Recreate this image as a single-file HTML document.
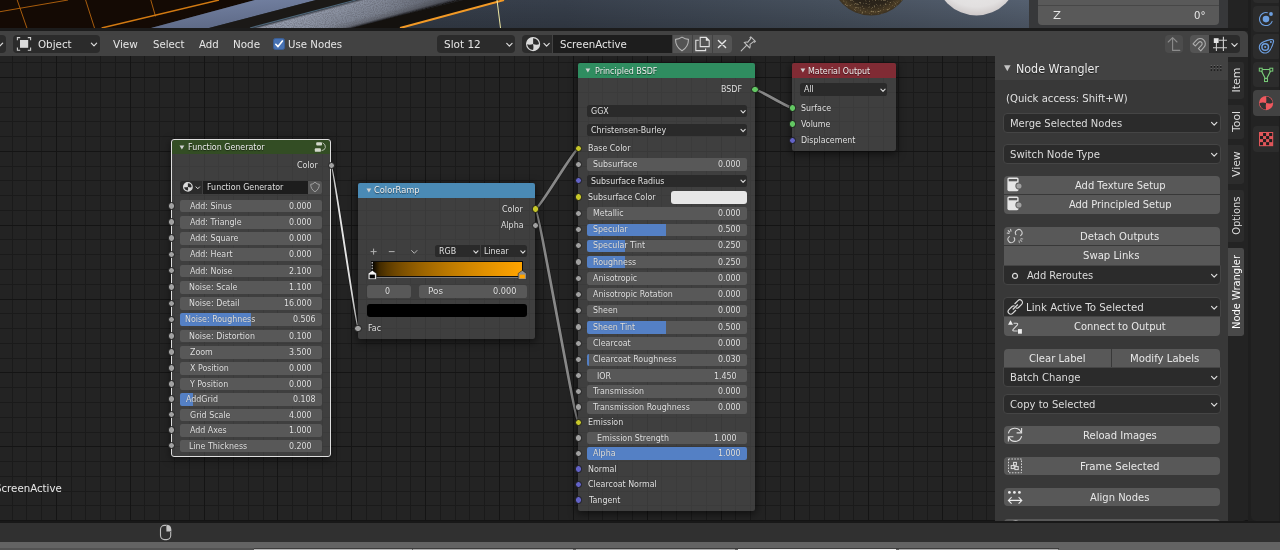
<!DOCTYPE html><html><head><meta charset="utf-8"><title>Blender Node Editor</title><style>
html,body{margin:0;padding:0}
body{width:1280px;height:550px;overflow:hidden;position:relative;background:#232323;font-family:"DejaVu Sans","Liberation Sans",sans-serif;}
#root{position:absolute;left:0;top:0;width:1280px;height:550px;overflow:hidden;will-change:transform}
.a{position:absolute;box-sizing:border-box}
.t{white-space:nowrap;line-height:16px;height:16px;transform-origin:0 50%}
.sh{text-shadow:0 1px 1px rgba(0,0,0,.55)}
.n{text-shadow:0 0 1px rgba(0,0,0,.45)}
svg{position:absolute;overflow:visible}
</style></head><body><div id="root"><svg class="a" style="left:0;top:0" width="1280" height="28" viewBox="0 0 1280 28">
<defs>
<linearGradient id="sl" x1="0" x2="1" y1="0" y2="0"><stop offset="0" stop-color="#343b47"/><stop offset=".55" stop-color="#373f4b"/><stop offset=".8" stop-color="#46505d"/><stop offset="1" stop-color="#556070"/></linearGradient>
<linearGradient id="slv" x1="0" x2="0" y1="0" y2="1"><stop offset="0" stop-color="#000" stop-opacity="0"/><stop offset="1" stop-color="#000" stop-opacity=".16"/></linearGradient>
<linearGradient id="lea" gradientUnits="userSpaceOnUse" x1="303" y1="14" x2="309.8" y2="39.6"><stop offset="0" stop-color="#2a2e35"/><stop offset=".1" stop-color="#959cac"/><stop offset=".7" stop-color="#878e9d"/><stop offset=".9" stop-color="#6c717c"/><stop offset=".975" stop-color="#2a2b30"/><stop offset="1" stop-color="#17140f"/></linearGradient>
<linearGradient id="lea2" gradientUnits="userSpaceOnUse" x1="300" y1="0" x2="470" y2="0"><stop offset="0" stop-color="#16161a" stop-opacity="0"/><stop offset=".5" stop-color="#16161a" stop-opacity=".12"/><stop offset="1" stop-color="#16161a" stop-opacity=".45"/></linearGradient>
<linearGradient id="blu" x1="0" x2="0.3" y1="0" y2="1"><stop offset="0" stop-color="#7482a3"/><stop offset="1" stop-color="#5f6b88"/></linearGradient>
<radialGradient id="ws" cx=".5" cy=".35" r=".68"><stop offset="0" stop-color="#efefef"/><stop offset=".8" stop-color="#e2e0e0"/><stop offset=".95" stop-color="#cfcaca"/><stop offset="1" stop-color="#b9b3b4"/></radialGradient>
<radialGradient id="ds" cx=".5" cy=".5" r=".5"><stop offset="0" stop-color="#1a1611"/><stop offset=".75" stop-color="#2b241a"/><stop offset=".93" stop-color="#4a3c25"/><stop offset="1" stop-color="#3a3020"/></radialGradient>
<filter id="grain" x="0" y="0" width="1" height="1"><feTurbulence type="fractalNoise" baseFrequency=".9" numOctaves="2" seed="7" result="n"/><feColorMatrix in="n" type="matrix" values="0 0 0 0 .08  0 0 0 0 .08  0 0 0 0 .1  0 0 0 1.6 -.55"/><feComposite in2="SourceGraphic" operator="in"/></filter>
<filter id="spk" x="0" y="0" width="1" height="1"><feTurbulence type="fractalNoise" baseFrequency=".55" numOctaves="2" seed="3" result="n"/><feColorMatrix in="n" type="matrix" values="0 0 0 0 .62  0 0 0 0 .5  0 0 0 0 .27  0 0 0 3.4 -1.95"/><feComposite in2="SourceGraphic" operator="in"/></filter>
</defs>
<rect x="0" y="0" width="1030" height="28" fill="url(#sl)"/>
<rect x="0" y="0" width="1030" height="28" fill="url(#slv)"/>
<polygon points="0,0 255,0 151,28 0,28" fill="#140a04"/>
<polygon points="255,0 316,0 209,28 151,28" fill="url(#blu)"/>
<polygon points="316,0 356,0 250,28 209,28" fill="#1b1917"/>
<line x1="356" y1="0" x2="250" y2="28" stroke="#4d6577" stroke-width="1.2"/>
<polygon points="358,0 463,0 400,15.6 352,28 254,28" fill="url(#lea)"/>
<polygon points="358,0 463,0 400,15.6 352,28 254,28" fill="url(#lea2)"/>
<polygon points="358,0 463,0 400,15.6 352,28 254,28" fill="#000" filter="url(#grain)" opacity=".55"/>
<polygon points="463,0 504,0 400,28 352,28 400,15.6" fill="#14110e"/>
<g stroke="#b9670f" stroke-width=".9" fill="none"><line x1="0" y1="11.7" x2="68" y2="0"/><line x1="17.2" y1="0" x2="26.9" y2="28"/><line x1="85.6" y1="0" x2="94.5" y2="28"/><line x1="150.8" y1="0" x2="155.5" y2="16.4"/></g>
<line x1="101.6" y1="28" x2="219" y2="0" stroke="#d27a12" stroke-width="1.4"/>
<line x1="400" y1="28" x2="504" y2="0" stroke="#f39a26" stroke-width="2"/>
<line x1="497" y1="0" x2="500.5" y2="28" stroke="#ede6a2" stroke-width="1"/>
<circle cx="871" cy="-25" r="40.5" fill="url(#ds)"/>
<circle cx="871" cy="-25" r="40" fill="#000" filter="url(#spk)" opacity=".6"/>
<circle cx="976.5" cy="-25.6" r="41" fill="url(#ws)"/>
</svg>
<div class="a" style="left:1029px;top:0px;width:199px;height:28px;background:#37383a;"></div>
<div class="a" style="left:1228px;top:0px;width:20px;height:28px;background:#232323;border-radius:0 0 5px 0;"></div>
<div class="a" style="left:1037.5px;top:0px;width:181.5px;height:25px;background:#595959;border-radius:0 0 4px 4px;"></div>
<div class="a" style="left:1037.5px;top:5px;width:181.5px;height:1px;background:#474747;"></div>
<div class="a t " style="left:1052.72px;top:8.01px;font-size:11px;color:#e6e6e6;transform:scaleX(1.0606);">Z</div>
<div class="a t " style="left:1194.36px;top:8.01px;font-size:11px;color:#e6e6e6;transform:scaleX(0.9250);">0°</div>
<div class="a" style="left:0px;top:28px;width:1280px;height:3px;background:#1c1c1c;"></div>
<svg class="a" style="left:0;top:56px" width="1248" height="466" viewBox="0 56 1248 466" shape-rendering="crispEdges">
<rect x="0" y="56" width="1248" height="466" fill="#232323"/>
<path d="M12.5 56V522M26.5 56V522M41.5 56V522M71.5 56V522M85.5 56V522M100.5 56V522M115.5 56V522M144.5 56V522M159.5 56V522M174.5 56V522M189.5 56V522M218.5 56V522M233.5 56V522M248.5 56V522M263.5 56V522M292.5 56V522M307.5 56V522M322.5 56V522M336.5 56V522M366.5 56V522M381.5 56V522M396.5 56V522M410.5 56V522M440.5 56V522M455.5 56V522M469.5 56V522M484.5 56V522M514.5 56V522M529.5 56V522M543.5 56V522M558.5 56V522M588.5 56V522M602.5 56V522M617.5 56V522M632.5 56V522M661.5 56V522M676.5 56V522M691.5 56V522M706.5 56V522M735.5 56V522M750.5 56V522M765.5 56V522M780.5 56V522M809.5 56V522M824.5 56V522M839.5 56V522M853.5 56V522M883.5 56V522M898.5 56V522M913.5 56V522M927.5 56V522M957.5 56V522M972.5 56V522M986.5 56V522M1001.5 56V522M1031.5 56V522M1046.5 56V522M1060.5 56V522M1075.5 56V522M1105.5 56V522M1119.5 56V522M1134.5 56V522M1149.5 56V522M1178.5 56V522M1193.5 56V522M1208.5 56V522M1223.5 56V522M0 62.5H1248M0 92.5H1248M0 107.5H1248M0 121.5H1248M0 136.5H1248M0 166.5H1248M0 180.5H1248M0 195.5H1248M0 210.5H1248M0 239.5H1248M0 254.5H1248M0 269.5H1248M0 284.5H1248M0 313.5H1248M0 328.5H1248M0 343.5H1248M0 358.5H1248M0 387.5H1248M0 402.5H1248M0 417.5H1248M0 432.5H1248M0 461.5H1248M0 476.5H1248M0 491.5H1248M0 505.5H1248" stroke="#1a1a1a" stroke-width="1" fill="none"/>
<path d="M56.5 56V522M130.5 56V522M204.5 56V522M277.5 56V522M351.5 56V522M425.5 56V522M499.5 56V522M573.5 56V522M647.5 56V522M721.5 56V522M794.5 56V522M868.5 56V522M942.5 56V522M1016.5 56V522M1090.5 56V522M1164.5 56V522M1238.5 56V522M0 77.5H1248M0 151.5H1248M0 225.5H1248M0 299.5H1248M0 372.5H1248M0 446.5H1248M0 520.5H1248" stroke="#141414" stroke-width="1" fill="none"/>
</svg>
<div class="a" style="left:0px;top:31px;width:1248px;height:25px;background:#424242;border-radius:0 5px 0 0;"></div>
<div class="a" style="left:1228px;top:40px;width:20px;height:17px;background:#424242;"></div>
<div class="a" style="left:-5px;top:35px;width:10.5px;height:18px;background:#2b2b2b;border-radius:4px;"></div>
<svg class="a" style="left:0;top:0" width="1" height="1"><path d="M-2.65 43.15L0 45.85L2.65 43.15" stroke="#dcdcdc" stroke-width="1.2" fill="none" stroke-linecap="round" stroke-linejoin="round"/></svg>
<div class="a" style="left:13px;top:35px;width:87px;height:18px;background:#2b2b2b;border-radius:4px;"></div>
<div class="a t " style="left:38.44px;top:37.01px;font-size:11px;color:#e6e6e6;transform:scaleX(0.9382);">Object</div>
<svg class="a" style="left:0;top:0" width="1" height="1"><path d="M91.35 43.15L94 45.85L96.65 43.15" stroke="#dcdcdc" stroke-width="1.2" fill="none" stroke-linecap="round" stroke-linejoin="round"/></svg>
<div class="a t " style="left:113.05px;top:37.01px;font-size:11px;color:#e6e6e6;transform:scaleX(0.9529);">View</div>
<div class="a t " style="left:152.85px;top:37.01px;font-size:11px;color:#e6e6e6;transform:scaleX(0.9250);">Select</div>
<div class="a t " style="left:199.35px;top:37.01px;font-size:11px;color:#e6e6e6;transform:scaleX(0.9228);">Add</div>
<div class="a t " style="left:232.51px;top:37.01px;font-size:11px;color:#e6e6e6;transform:scaleX(0.9413);">Node</div>
<div class="a" style="left:273px;top:38px;width:12.3px;height:12.3px;background:#4772b3;border-radius:2.5px;border:1px solid #3a5e95;"></div>
<svg class="a" style="left:273px;top:38px" width="12" height="12" viewBox="0 0 12 12"><path d="M2.8 6.3L5 8.6L9.4 3" stroke="#fff" stroke-width="1.6" fill="none" stroke-linecap="round" stroke-linejoin="round"/></svg>
<div class="a t " style="left:288.12px;top:37.01px;font-size:11px;color:#e6e6e6;transform:scaleX(0.9262);">Use Nodes</div>
<div class="a" style="left:437px;top:35px;width:78px;height:18px;background:#2b2b2b;border-radius:4px;"></div>
<div class="a t " style="left:443.73px;top:37.01px;font-size:11px;color:#e6e6e6;transform:scaleX(0.9517);">Slot 12</div>
<svg class="a" style="left:0;top:0" width="1" height="1"><path d="M506.75 43.449999999999996L509.4 46.15L512.05 43.449999999999996" stroke="#dcdcdc" stroke-width="1.2" fill="none" stroke-linecap="round" stroke-linejoin="round"/></svg>
<div class="a" style="left:522.2px;top:35px;width:30px;height:18px;background:#2b2b2b;border-radius:4px 0 0 4px;"></div>
<svg class="a" style="left:525.8px;top:36.8px" width="14.2" height="14.2" viewBox="0 0 14.2 14.2"><circle cx="7.1" cy="7.1" r="6.5" fill="none" stroke="#dadada" stroke-width="1.2"/><path d="M7.1 7.1L7.1 0.6A6.5 6.5 0 0 0 0.6 7.1Q3.55 8.165 7.1 7.1Z" fill="#dadada"/><path d="M7.1 7.1Q10.649999999999999 8.52 13.6 7.1A6.5 6.5 0 0 1 7.1 13.6Q7.952 10.649999999999999 7.1 7.1Z" fill="#dadada"/></svg>
<svg class="a" style="left:0;top:0" width="1" height="1"><path d="M543.95 43.449999999999996L546.6 46.15L549.25 43.449999999999996" stroke="#dcdcdc" stroke-width="1.2" fill="none" stroke-linecap="round" stroke-linejoin="round"/></svg>
<div class="a" style="left:552.9px;top:35px;width:119px;height:18px;background:#1d1d1d;"></div>
<div class="a t " style="left:559.95px;top:37.01px;font-size:11px;color:#e6e6e6;transform:scaleX(0.9302);">ScreenActive</div>
<div class="a" style="left:672.5px;top:35px;width:19.4px;height:18px;background:#545454;"></div>
<svg class="a" style="left:681.6px;top:44.2px" width="1" height="1"><path d="M0 -6.85Q3.25 -4.6499999999999995 6.5 -4.6499999999999995Q6.5 3.0825 0 6.85Q-6.5 3.0825 -6.5 -4.6499999999999995Q-3.25 -4.6499999999999995 0 -6.85Z" fill="none" stroke="#b4b4b4" stroke-width="1.1" stroke-linejoin="round"/></svg>
<div class="a" style="left:692.75px;top:35px;width:19.2px;height:18px;background:#545454;"></div>
<svg class="a" style="left:692.75px;top:35px" width="20" height="18" viewBox="0 0 20 18"><path d="M5.8 5.2H2.8V15.6H12.6V13.4" fill="none" stroke="#e0e0e0" stroke-width="1.1"/><path d="M7.2 2.4H13.2L16.2 5.4V11.6H7.2Z" fill="none" stroke="#e0e0e0" stroke-width="1.1"/><path d="M12.8 2.2L16.4 5.8H12.8Z" fill="#ececec"/></svg>
<div class="a" style="left:712.9px;top:35px;width:19px;height:18px;background:#545454;border-radius:0 4px 4px 0;"></div>
<svg class="a" style="left:712.9px;top:35px" width="19" height="18" viewBox="0 0 19 18"><path d="M5.4 5.4L12.6 12.6M12.6 5.4L5.4 12.6" stroke="#e6e6e6" stroke-width="1.4" stroke-linecap="round"/></svg>
<svg class="a" style="left:740px;top:36px" width="17" height="16" viewBox="0 0 17 16"><path d="M1.2 14.8L6.8 9.2" stroke="#bdbdbd" stroke-width="1.1" stroke-linecap="round"/><path d="M4.2 6.4Q6 5.6 7.8 6.2L10.6 2.6L10 1.6L10.8 0.8L15.4 5.4L14.6 6.2L13.6 5.6L10 8.4Q10.6 10.2 9.8 12Z" fill="none" stroke="#bdbdbd" stroke-width="1.1" stroke-linejoin="round"/></svg>
<div class="a" style="left:1165px;top:35px;width:18px;height:18px;background:#4c4c4c;border-radius:4px;"></div>
<svg class="a" style="left:1165px;top:35px" width="18" height="18" viewBox="0 0 18 18"><path d="M3.2 7L7.6 2.6L12 7M7.6 2.8V15.4H14.8" fill="none" stroke="#8c8c8c" stroke-width="1.1" stroke-linecap="round" stroke-linejoin="round"/></svg>
<div class="a" style="left:1190px;top:35px;width:19px;height:18px;background:#545454;border-radius:4px 0 0 4px;"></div>
<svg class="a" style="left:1190px;top:35px" width="19" height="18" viewBox="0 0 19 18"><g transform="translate(9.2 9.8) rotate(42)"><path d="M-5.2 3.4V-1.4A5.2 5.2 0 0 1 5.2 -1.4V3.4H2V-1.4A2 2 0 0 0 -2 -1.4V3.4Z" fill="none" stroke="#adadad" stroke-width="1.1" stroke-linejoin="round"/></g></svg>
<div class="a" style="left:1209px;top:35px;width:31px;height:18px;background:#2b2b2b;border-radius:0 4px 4px 0;"></div>
<svg class="a" style="left:1209px;top:35px" width="31" height="18" viewBox="0 0 31 18"><rect x="4.8" y="3.2" width="4.8" height="4.8" fill="#e4e4e4"/><path d="M7.4 8V16M14.4 1.8V16M9.6 5.2H18M4 12.7H18" stroke="#cfcfcf" stroke-width="1.1" fill="none"/></svg>
<svg class="a" style="left:0;top:0" width="1" height="1"><path d="M1231.85 43.65L1234.5 46.35L1237.15 43.65" stroke="#dcdcdc" stroke-width="1.2" fill="none" stroke-linecap="round" stroke-linejoin="round"/></svg>
<svg class="a" style="left:16px;top:36px" width="16" height="16" viewBox="0 0 16 16"><rect x="4" y="4" width="8.2" height="7.8" fill="#dcdcdc"/><path d="M1.4 4.2V1.6H4.2M11.8 1.6H14.6V4.2M14.6 11.6V14.2H11.8M4.2 14.2H1.4V11.6" fill="none" stroke="#cfcfcf" stroke-width="1.1"/></svg>
<svg class="a" style="left:0;top:0" width="1" height="1"><path d="M331.3 165.5C333.3 165.5 356.2 328.6 358.2 328.6" stroke="#141414" stroke-width="3.0999999999999996" fill="none" opacity=".5"/><path d="M331.3 165.5C333.3 165.5 356.2 328.6 358.2 328.6" stroke="#e4e4e4" stroke-width="1.9" fill="none"/></svg>
<svg class="a" style="left:0;top:0" width="1" height="1"><path d="M535.5 209C539.5 209 574.3 148.6 578.3 148.6" stroke="#141414" stroke-width="3.9000000000000004" fill="none" opacity=".5"/><path d="M535.5 209C539.5 209 574.3 148.6 578.3 148.6" stroke="#888888" stroke-width="2.7" fill="none"/></svg>
<svg class="a" style="left:0;top:0" width="1" height="1"><path d="M535.5 209C538.5 209 575.3 422.3 578.3 422.3" stroke="#141414" stroke-width="3.9000000000000004" fill="none" opacity=".5"/><path d="M535.5 209C538.5 209 575.3 422.3 578.3 422.3" stroke="#888888" stroke-width="2.7" fill="none"/></svg>
<svg class="a" style="left:0;top:0" width="1" height="1"><path d="M755 89.5C759.0 89.5 788.4 108 792.4 108" stroke="#141414" stroke-width="3.9000000000000004" fill="none" opacity=".5"/><path d="M755 89.5C759.0 89.5 788.4 108 792.4 108" stroke="#888888" stroke-width="2.7" fill="none"/></svg>
<div class="a" style="left:171.5px;top:139.5px;width:158.89999999999998px;height:316.8px;border-radius:2.2px;background:rgba(78,78,78,.66);box-shadow:0 2px 8px 1px rgba(0,0,0,.55);overflow:hidden;"><div class="a" style="left:0;top:0;width:158.89999999999998px;height:14.300000000000011px;background:#334d24"></div></div>
<div class="a" style="left:171.0px;top:139.0px;width:159.89999999999998px;height:317.8px;border-radius:3px;border:1px solid #dedede;"></div>
<svg class="a" style="left:178.5px;top:144.55px" width="6" height="5" viewBox="0 0 6 5"><path d="M0.5 0.6H5.3L2.9 4.6Z" fill="#d0d0d0"/></svg>
<div class="a t sh" style="left:187.94px;top:139.26px;font-size:8.4px;color:#ececec;transform:scaleX(0.9477);">Function Generator</div>
<svg class="a" style="left:314px;top:141px" width="13" height="12" viewBox="0 0 13 12"><rect x="2.2" y="1.2" width="5.8" height="3.3" rx=".9" fill="#d3d8cc"/><rect x=".8" y="7.3" width="6.1" height="3.5" rx=".9" fill="#d3d8cc"/><path d="M8.6 1.8Q11.8 3.4 11.4 6.4Q11 9.2 7.6 9.6" fill="none" stroke="#c2c8ba" stroke-width=".9"/></svg>
<div class="a t n" style="left:297.03px;top:157.11px;font-size:8.4px;color:#e2e2e2;transform:scaleX(0.9450);">Color</div>
<div class="a" style="left:180.4px;top:181px;width:22px;height:12.6px;background:#2b2b2b;border-radius:2.6px 0 0 2.6px;"></div>
<svg class="a" style="left:182.7px;top:182.4px" width="9.8" height="9.8" viewBox="0 0 9.8 9.8"><circle cx="4.9" cy="4.9" r="4.300000000000001" fill="none" stroke="#dadada" stroke-width="1.2"/><path d="M4.9 4.9L4.9 0.6A4.300000000000001 4.300000000000001 0 0 0 0.6 4.9Q2.45 5.635 4.9 4.9Z" fill="#dadada"/><path d="M4.9 4.9Q7.3500000000000005 5.88 9.200000000000001 4.9A4.300000000000001 4.300000000000001 0 0 1 4.9 9.200000000000001Q5.488000000000001 7.3500000000000005 4.9 4.9Z" fill="#dadada"/></svg>
<svg class="a" style="left:0;top:0" width="1" height="1"><path d="M196.0 186.85000000000002L197.8 188.75L199.60000000000002 186.85000000000002" stroke="#dcdcdc" stroke-width="1.0" fill="none" stroke-linecap="round" stroke-linejoin="round"/></svg>
<div class="a" style="left:202.6px;top:181px;width:105px;height:12.6px;background:#1d1d1d;"></div>
<div class="a t n" style="left:206.54px;top:178.91px;font-size:8.4px;color:#e2e2e2;transform:scaleX(0.9450);">Function Generator</div>
<div class="a" style="left:307.6px;top:181px;width:14.2px;height:12.6px;background:#545454;border-radius:0 2.6px 2.6px 0;"></div>
<svg class="a" style="left:314.7px;top:187.4px" width="1" height="1"><path d="M0 -4.8Q2.15 -2.5999999999999996 4.3 -2.5999999999999996Q4.3 2.16 0 4.8Q-4.3 2.16 -4.3 -2.5999999999999996Q-2.15 -2.5999999999999996 0 -4.8Z" fill="none" stroke="#a8a8a8" stroke-width="0.9" stroke-linejoin="round"/></svg>
<div class="a" style="left:180px;top:199.70px;width:142px;height:12.7px;border-radius:2.2px;background:#585858;overflow:hidden"></div>
<div class="a t n" style="left:190.15px;top:198.21px;font-size:8.4px;color:#e2e2e2;transform:scaleX(0.9450);">Add: Sinus</div>
<div class="a t n" style="left:289.39px;top:198.21px;font-size:8.4px;color:#e2e2e2;transform:scaleX(0.9450);">0.000</div>
<div class="a" style="left:180px;top:216.00px;width:142px;height:12.7px;border-radius:2.2px;background:#585858;overflow:hidden"></div>
<div class="a t n" style="left:190.15px;top:213.71px;font-size:8.4px;color:#e2e2e2;transform:scaleX(0.9450);">Add: Triangle</div>
<div class="a t n" style="left:289.39px;top:213.71px;font-size:8.4px;color:#e2e2e2;transform:scaleX(0.9450);">0.000</div>
<div class="a" style="left:180px;top:232.00px;width:142px;height:12.7px;border-radius:2.2px;background:#585858;overflow:hidden"></div>
<div class="a t n" style="left:190.15px;top:229.71px;font-size:8.4px;color:#e2e2e2;transform:scaleX(0.9450);">Add: Square</div>
<div class="a t n" style="left:289.39px;top:229.71px;font-size:8.4px;color:#e2e2e2;transform:scaleX(0.9450);">0.000</div>
<div class="a" style="left:180px;top:248.30px;width:142px;height:12.7px;border-radius:2.2px;background:#585858;overflow:hidden"></div>
<div class="a t n" style="left:190.15px;top:246.01px;font-size:8.4px;color:#e2e2e2;transform:scaleX(0.9450);">Add: Heart</div>
<div class="a t n" style="left:289.39px;top:246.01px;font-size:8.4px;color:#e2e2e2;transform:scaleX(0.9450);">0.000</div>
<div class="a" style="left:180px;top:264.60px;width:142px;height:12.7px;border-radius:2.2px;background:#585858;overflow:hidden"></div>
<div class="a t n" style="left:190.15px;top:263.11px;font-size:8.4px;color:#e2e2e2;transform:scaleX(0.9450);">Add: Noise</div>
<div class="a t n" style="left:289.39px;top:263.11px;font-size:8.4px;color:#e2e2e2;transform:scaleX(0.9450);">2.100</div>
<div class="a" style="left:180px;top:280.90px;width:142px;height:12.7px;border-radius:2.2px;background:#585858;overflow:hidden"></div>
<div class="a t n" style="left:189.44px;top:278.61px;font-size:8.4px;color:#e2e2e2;transform:scaleX(0.9450);">Noise: Scale</div>
<div class="a t n" style="left:289.39px;top:278.61px;font-size:8.4px;color:#e2e2e2;transform:scaleX(0.9450);">1.100</div>
<div class="a" style="left:180px;top:297.20px;width:142px;height:12.7px;border-radius:2.2px;background:#585858;overflow:hidden"></div>
<div class="a t n" style="left:189.44px;top:294.91px;font-size:8.4px;color:#e2e2e2;transform:scaleX(0.9450);">Noise: Detail</div>
<div class="a t n" style="left:284.34px;top:294.91px;font-size:8.4px;color:#e2e2e2;transform:scaleX(0.9450);">16.000</div>
<div class="a" style="left:180px;top:313.40px;width:142px;height:12.7px;border-radius:2.2px;background:#585858;overflow:hidden"><div class="a" style="left:0;top:0;height:12.7px;width:70.57px;background:#5480c5"></div></div>
<div class="a t n" style="left:185.44px;top:311.11px;font-size:8.4px;color:#e2e2e2;transform:scaleX(0.9450);">Noise: Roughness</div>
<div class="a t n" style="left:292.84px;top:311.11px;font-size:8.4px;color:#e2e2e2;transform:scaleX(0.9450);">0.506</div>
<div class="a" style="left:180px;top:329.70px;width:142px;height:12.7px;border-radius:2.2px;background:#585858;overflow:hidden"></div>
<div class="a t n" style="left:189.44px;top:328.21px;font-size:8.4px;color:#e2e2e2;transform:scaleX(0.9450);">Noise: Distortion</div>
<div class="a t n" style="left:289.39px;top:328.21px;font-size:8.4px;color:#e2e2e2;transform:scaleX(0.9450);">0.100</div>
<div class="a" style="left:180px;top:346.00px;width:142px;height:12.7px;border-radius:2.2px;background:#585858;overflow:hidden"></div>
<div class="a t n" style="left:189.87px;top:343.71px;font-size:8.4px;color:#e2e2e2;transform:scaleX(0.9450);">Zoom</div>
<div class="a t n" style="left:289.39px;top:343.71px;font-size:8.4px;color:#e2e2e2;transform:scaleX(0.9450);">3.500</div>
<div class="a" style="left:180px;top:362.00px;width:142px;height:12.7px;border-radius:2.2px;background:#585858;overflow:hidden"></div>
<div class="a t n" style="left:189.96px;top:359.71px;font-size:8.4px;color:#e2e2e2;transform:scaleX(0.9450);">X Position</div>
<div class="a t n" style="left:289.39px;top:359.71px;font-size:8.4px;color:#e2e2e2;transform:scaleX(0.9450);">0.000</div>
<div class="a" style="left:180px;top:377.80px;width:142px;height:12.7px;border-radius:2.2px;background:#585858;overflow:hidden"></div>
<div class="a t n" style="left:190.25px;top:375.51px;font-size:8.4px;color:#e2e2e2;transform:scaleX(0.9450);">Y Position</div>
<div class="a t n" style="left:289.39px;top:375.51px;font-size:8.4px;color:#e2e2e2;transform:scaleX(0.9450);">0.000</div>
<div class="a" style="left:180px;top:393.00px;width:142px;height:12.7px;border-radius:2.2px;background:#585858;overflow:hidden"><div class="a" style="left:0;top:0;height:12.7px;width:13.02px;background:#5480c5"></div></div>
<div class="a t n" style="left:186.15px;top:390.71px;font-size:8.4px;color:#e2e2e2;transform:scaleX(0.9450);">AddGrid</div>
<div class="a t n" style="left:292.89px;top:390.71px;font-size:8.4px;color:#e2e2e2;transform:scaleX(0.9450);">0.108</div>
<div class="a" style="left:180px;top:408.60px;width:142px;height:12.7px;border-radius:2.2px;background:#585858;overflow:hidden"></div>
<div class="a t n" style="left:189.77px;top:407.11px;font-size:8.4px;color:#e2e2e2;transform:scaleX(0.9450);">Grid Scale</div>
<div class="a t n" style="left:289.39px;top:407.11px;font-size:8.4px;color:#e2e2e2;transform:scaleX(0.9450);">4.000</div>
<div class="a" style="left:180px;top:424.10px;width:142px;height:12.7px;border-radius:2.2px;background:#585858;overflow:hidden"></div>
<div class="a t n" style="left:190.15px;top:421.81px;font-size:8.4px;color:#e2e2e2;transform:scaleX(0.9450);">Add Axes</div>
<div class="a t n" style="left:289.39px;top:421.81px;font-size:8.4px;color:#e2e2e2;transform:scaleX(0.9450);">1.000</div>
<div class="a" style="left:180px;top:439.60px;width:142px;height:12.7px;border-radius:2.2px;background:#585858;overflow:hidden"></div>
<div class="a t n" style="left:189.44px;top:438.11px;font-size:8.4px;color:#e2e2e2;transform:scaleX(0.9450);">Line Thickness</div>
<div class="a t n" style="left:289.39px;top:438.11px;font-size:8.4px;color:#e2e2e2;transform:scaleX(0.9450);">0.200</div>
<div class="a" style="left:327.50px;top:161.70px;width:7.6px;height:7.6px;border-radius:50%;background:#a1a1a1;border:.7px solid #1a1a1a"></div>
<div class="a" style="left:167.70px;top:202.00px;width:7.6px;height:7.6px;border-radius:50%;background:#a1a1a1;border:.7px solid #1a1a1a"></div>
<div class="a" style="left:167.70px;top:218.30px;width:7.6px;height:7.6px;border-radius:50%;background:#a1a1a1;border:.7px solid #1a1a1a"></div>
<div class="a" style="left:167.70px;top:234.30px;width:7.6px;height:7.6px;border-radius:50%;background:#a1a1a1;border:.7px solid #1a1a1a"></div>
<div class="a" style="left:167.70px;top:250.60px;width:7.6px;height:7.6px;border-radius:50%;background:#a1a1a1;border:.7px solid #1a1a1a"></div>
<div class="a" style="left:167.70px;top:266.90px;width:7.6px;height:7.6px;border-radius:50%;background:#a1a1a1;border:.7px solid #1a1a1a"></div>
<div class="a" style="left:167.70px;top:283.20px;width:7.6px;height:7.6px;border-radius:50%;background:#a1a1a1;border:.7px solid #1a1a1a"></div>
<div class="a" style="left:167.70px;top:299.50px;width:7.6px;height:7.6px;border-radius:50%;background:#a1a1a1;border:.7px solid #1a1a1a"></div>
<div class="a" style="left:167.70px;top:315.70px;width:7.6px;height:7.6px;border-radius:50%;background:#a1a1a1;border:.7px solid #1a1a1a"></div>
<div class="a" style="left:167.70px;top:332.00px;width:7.6px;height:7.6px;border-radius:50%;background:#a1a1a1;border:.7px solid #1a1a1a"></div>
<div class="a" style="left:167.70px;top:348.30px;width:7.6px;height:7.6px;border-radius:50%;background:#a1a1a1;border:.7px solid #1a1a1a"></div>
<div class="a" style="left:167.70px;top:364.30px;width:7.6px;height:7.6px;border-radius:50%;background:#a1a1a1;border:.7px solid #1a1a1a"></div>
<div class="a" style="left:167.70px;top:380.10px;width:7.6px;height:7.6px;border-radius:50%;background:#a1a1a1;border:.7px solid #1a1a1a"></div>
<div class="a" style="left:167.70px;top:395.30px;width:7.6px;height:7.6px;border-radius:50%;background:#a1a1a1;border:.7px solid #1a1a1a"></div>
<div class="a" style="left:167.70px;top:410.90px;width:7.6px;height:7.6px;border-radius:50%;background:#a1a1a1;border:.7px solid #1a1a1a"></div>
<div class="a" style="left:167.70px;top:426.40px;width:7.6px;height:7.6px;border-radius:50%;background:#a1a1a1;border:.7px solid #1a1a1a"></div>
<div class="a" style="left:167.70px;top:441.90px;width:7.6px;height:7.6px;border-radius:50%;background:#a1a1a1;border:.7px solid #1a1a1a"></div>
<div class="a" style="left:357.8px;top:182.8px;width:177.2px;height:156.7px;border-radius:2.2px;background:rgba(78,78,78,.66);box-shadow:0 2px 8px 1px rgba(0,0,0,.55);overflow:hidden;"><div class="a" style="left:0;top:0;width:177.2px;height:14.899999999999977px;background:#4a8ab5"></div></div>
<svg class="a" style="left:365.5px;top:188.15px" width="6" height="5" viewBox="0 0 6 5"><path d="M0.5 0.6H5.3L2.9 4.6Z" fill="#d0d0d0"/></svg>
<div class="a t sh" style="left:374.06px;top:181.81px;font-size:8.4px;color:#ececec;transform:scaleX(0.9876);">ColorRamp</div>
<div class="a t n" style="left:501.93px;top:200.61px;font-size:8.4px;color:#e2e2e2;transform:scaleX(0.9450);">Color</div>
<div class="a t n" style="left:500.84px;top:217.01px;font-size:8.4px;color:#e2e2e2;transform:scaleX(0.9450);">Alpha</div>
<svg class="a" style="left:369px;top:246.5px" width="10" height="10" viewBox="0 0 10 10"><path d="M4.6 1.6V7.6M1.6 4.6H7.6" stroke="#b0b0b0" stroke-width="1" fill="none"/></svg>
<svg class="a" style="left:387px;top:246.5px" width="10" height="10" viewBox="0 0 10 10"><path d="M1.8 4.6H7.6" stroke="#b0b0b0" stroke-width="1" fill="none"/></svg>
<svg class="a" style="left:0;top:0" width="1" height="1"><path d="M411.6 250.5L414.3 253.3L417.0 250.5" stroke="#b4b4b4" stroke-width="1.0" fill="none" stroke-linecap="round" stroke-linejoin="round"/></svg>
<div class="a" style="left:435.20px;top:245.30px;width:44.70px;height:12.20px;border-radius:2.6px 0 0 2.6px;background:#2a2a2a"></div>
<div class="a t n" style="left:438.54px;top:242.81px;font-size:8.4px;color:#e2e2e2;transform:scaleX(0.9450);">RGB</div>
<svg class="a" style="left:0;top:0" width="1" height="1"><path d="M473.79999999999995 250.9L475.9 253.1L478.0 250.9" stroke="#dcdcdc" stroke-width="1.1" fill="none" stroke-linecap="round" stroke-linejoin="round"/></svg>
<div class="a" style="left:480.90px;top:245.30px;width:46.00px;height:12.20px;border-radius:0 2.6px 2.6px 0;background:#2a2a2a"></div>
<div class="a t n" style="left:484.34px;top:242.81px;font-size:8.4px;color:#e2e2e2;transform:scaleX(0.9450);">Linear</div>
<svg class="a" style="left:0;top:0" width="1" height="1"><path d="M520.8 250.9L522.9 253.1L525.0 250.9" stroke="#dcdcdc" stroke-width="1.1" fill="none" stroke-linecap="round" stroke-linejoin="round"/></svg>
<div class="a" style="left:370.6px;top:260.8px;width:152.2px;height:15.9px;border:1px solid #0c0c0c;background:linear-gradient(90deg,rgb(0,0,0) 0%,rgb(65,42,0) 5%,rgb(90,58,0) 10%,rgb(108,69,0) 15%,rgb(123,79,0) 20%,rgb(136,87,0) 25%,rgb(148,95,0) 30%,rgb(158,102,0) 35%,rgb(168,108,0) 40%,rgb(177,114,0) 45%,rgb(186,120,0) 50%,rgb(194,125,0) 55%,rgb(202,130,0) 60%,rgb(210,135,0) 65%,rgb(217,139,0) 70%,rgb(224,144,0) 75%,rgb(230,148,0) 80%,rgb(237,152,0) 85%,rgb(243,156,0) 90%,rgb(249,160,0) 95%,rgb(255,164,0) 100%)"></div>
<div class="a" style="left:375px;top:277px;width:144px;height:1px;background:#7c7c7c;"></div>
<svg class="a" style="left:367px;top:261px" width="12" height="20" viewBox="0 0 12 20"><path d="M5.2 1V9" stroke="#fff" stroke-width="1" stroke-dasharray="1.6 1.2"/><path d="M1.2 18.5V12.4L5.3 9.4L9.4 12.4V18.5Z" fill="#f6f6f6" stroke="#141414" stroke-width=".5"/><rect x="2.6" y="13.6" width="5.3" height="3.8" fill="#050505"/></svg>
<svg class="a" style="left:517.4px;top:261px" width="12" height="20" viewBox="0 0 12 20"><path d="M1.2 18.5V12.4L5.3 9.4L9.4 12.4V18.5Z" fill="#909090" stroke="#141414" stroke-width=".5"/><rect x="2.6" y="13.6" width="5.3" height="3.8" fill="#ffa400"/></svg>
<div class="a" style="left:367px;top:285px;width:44px;height:12.6px;border-radius:2.6px;background:#585858"></div>
<div class="a t n" style="left:385.47px;top:282.91px;font-size:8.4px;color:#e2e2e2;transform:scaleX(0.9450);">0</div>
<div class="a" style="left:419px;top:285px;width:108px;height:12.6px;border-radius:2.6px;background:#585858"></div>
<div class="a t n" style="left:428.16px;top:282.91px;font-size:8.4px;color:#e2e2e2;transform:scaleX(1.0530);">Pos</div>
<div class="a t n" style="left:493.46px;top:282.91px;font-size:8.4px;color:#e2e2e2;transform:scaleX(0.9759);">0.000</div>
<div class="a" style="left:367px;top:304px;width:160px;height:12.8px;background:#000;border-radius:3px;"></div>
<div class="a t n" style="left:367.94px;top:320.21px;font-size:8.4px;color:#e2e2e2;transform:scaleX(0.9450);">Fac</div>
<div class="a" style="left:531.70px;top:205.20px;width:7.6px;height:7.6px;border-radius:50%;background:#c7c729;border:.7px solid #1a1a1a"></div>
<div class="a" style="left:531.70px;top:221.60px;width:7.6px;height:7.6px;border-radius:50%;background:#a1a1a1;border:.7px solid #1a1a1a"></div>
<div class="a" style="left:354.40px;top:324.80px;width:7.6px;height:7.6px;border-radius:50%;background:#a1a1a1;border:.7px solid #1a1a1a"></div>
<div class="a" style="left:578px;top:63.2px;width:177px;height:447.6px;border-radius:2.2px;background:rgba(78,78,78,.66);box-shadow:0 2px 8px 1px rgba(0,0,0,.55);overflow:hidden;"><div class="a" style="left:0;top:0;width:177px;height:14.5px;background:#2f8d60"></div></div>
<svg class="a" style="left:585.0px;top:68.35000000000001px" width="6" height="5" viewBox="0 0 6 5"><path d="M0.5 0.6H5.3L2.9 4.6Z" fill="#d0d0d0"/></svg>
<div class="a t sh" style="left:594.74px;top:63.06px;font-size:8.4px;color:#ececec;transform:scaleX(0.9462);">Principled BSDF</div>
<div class="a t n" style="left:721.23px;top:81.11px;font-size:8.4px;color:#e2e2e2;transform:scaleX(0.9450);">BSDF</div>
<div class="a" style="left:587.20px;top:105.20px;width:159.90px;height:12.00px;border-radius:2.6px;background:#2a2a2a"></div>
<div class="a t n" style="left:590.97px;top:102.81px;font-size:8.4px;color:#e2e2e2;transform:scaleX(0.9450);">GGX</div>
<svg class="a" style="left:0;top:0" width="1" height="1"><path d="M741.0 110.7L743.1 112.89999999999999L745.2 110.7" stroke="#dcdcdc" stroke-width="1.1" fill="none" stroke-linecap="round" stroke-linejoin="round"/></svg>
<div class="a" style="left:587.20px;top:123.90px;width:159.90px;height:12.00px;border-radius:2.6px;background:#2a2a2a"></div>
<div class="a t n" style="left:590.97px;top:121.51px;font-size:8.4px;color:#e2e2e2;transform:scaleX(0.9450);">Christensen-Burley</div>
<svg class="a" style="left:0;top:0" width="1" height="1"><path d="M741.0 129.4L743.1 131.6L745.2 129.4" stroke="#dcdcdc" stroke-width="1.1" fill="none" stroke-linecap="round" stroke-linejoin="round"/></svg>
<div class="a t n" style="left:587.84px;top:140.01px;font-size:8.4px;color:#e2e2e2;transform:scaleX(0.9450);">Base Color</div>
<div class="a" style="left:587.2px;top:158.30px;width:159.89999999999998px;height:12.7px;border-radius:2.2px;background:#585858;overflow:hidden"></div>
<div class="a t n" style="left:592.88px;top:156.01px;font-size:8.4px;color:#e2e2e2;transform:scaleX(0.9450);">Subsurface</div>
<div class="a t n" style="left:717.99px;top:156.01px;font-size:8.4px;color:#e2e2e2;transform:scaleX(0.9450);">0.000</div>
<div class="a" style="left:587.20px;top:174.70px;width:159.90px;height:12.00px;border-radius:2.6px;background:#2a2a2a"></div>
<div class="a t n" style="left:591.18px;top:172.91px;font-size:8.4px;color:#e2e2e2;transform:scaleX(0.9450);">Subsurface Radius</div>
<svg class="a" style="left:0;top:0" width="1" height="1"><path d="M741.0 180.2L743.1 182.39999999999998L745.2 180.2" stroke="#dcdcdc" stroke-width="1.1" fill="none" stroke-linecap="round" stroke-linejoin="round"/></svg>
<div class="a t n" style="left:587.98px;top:188.61px;font-size:8.4px;color:#e2e2e2;transform:scaleX(0.9450);">Subsurface Color</div>
<div class="a" style="left:671.2px;top:191.2px;width:75.9px;height:13px;background:#e7e7e7;border-radius:3px;"></div>
<div class="a" style="left:587.2px;top:207.20px;width:159.89999999999998px;height:12.7px;border-radius:2.2px;background:#585858;overflow:hidden"></div>
<div class="a t n" style="left:592.64px;top:204.91px;font-size:8.4px;color:#e2e2e2;transform:scaleX(0.9450);">Metallic</div>
<div class="a t n" style="left:717.99px;top:204.91px;font-size:8.4px;color:#e2e2e2;transform:scaleX(0.9450);">0.000</div>
<div class="a" style="left:587.2px;top:223.50px;width:159.89999999999998px;height:12.7px;border-radius:2.2px;background:#585858;overflow:hidden"><div class="a" style="left:0;top:0;height:12.7px;width:78.65px;background:#5480c5"></div></div>
<div class="a t n" style="left:592.88px;top:221.21px;font-size:8.4px;color:#e2e2e2;transform:scaleX(0.9450);">Specular</div>
<div class="a t n" style="left:717.99px;top:221.21px;font-size:8.4px;color:#e2e2e2;transform:scaleX(0.9450);">0.500</div>
<div class="a" style="left:587.2px;top:239.50px;width:159.89999999999998px;height:12.7px;border-radius:2.2px;background:#585858;overflow:hidden"><div class="a" style="left:0;top:0;height:12.7px;width:38.02px;background:#5480c5"></div></div>
<div class="a t n" style="left:592.88px;top:237.21px;font-size:8.4px;color:#e2e2e2;transform:scaleX(0.9450);">Specular Tint</div>
<div class="a t n" style="left:717.99px;top:237.21px;font-size:8.4px;color:#e2e2e2;transform:scaleX(0.9450);">0.250</div>
<div class="a" style="left:587.2px;top:255.80px;width:159.89999999999998px;height:12.7px;border-radius:2.2px;background:#585858;overflow:hidden"><div class="a" style="left:0;top:0;height:12.7px;width:38.02px;background:#5480c5"></div></div>
<div class="a t n" style="left:592.64px;top:253.51px;font-size:8.4px;color:#e2e2e2;transform:scaleX(0.9450);">Roughness</div>
<div class="a t n" style="left:717.99px;top:253.51px;font-size:8.4px;color:#e2e2e2;transform:scaleX(0.9450);">0.250</div>
<div class="a" style="left:587.2px;top:272.20px;width:159.89999999999998px;height:12.7px;border-radius:2.2px;background:#585858;overflow:hidden"></div>
<div class="a t n" style="left:593.35px;top:269.91px;font-size:8.4px;color:#e2e2e2;transform:scaleX(0.9450);">Anisotropic</div>
<div class="a t n" style="left:717.99px;top:269.91px;font-size:8.4px;color:#e2e2e2;transform:scaleX(0.9450);">0.000</div>
<div class="a" style="left:587.2px;top:288.30px;width:159.89999999999998px;height:12.7px;border-radius:2.2px;background:#585858;overflow:hidden"></div>
<div class="a t n" style="left:593.35px;top:286.01px;font-size:8.4px;color:#e2e2e2;transform:scaleX(0.9450);">Anisotropic Rotation</div>
<div class="a t n" style="left:717.99px;top:286.01px;font-size:8.4px;color:#e2e2e2;transform:scaleX(0.9450);">0.000</div>
<div class="a" style="left:587.2px;top:304.60px;width:159.89999999999998px;height:12.7px;border-radius:2.2px;background:#585858;overflow:hidden"></div>
<div class="a t n" style="left:592.88px;top:302.31px;font-size:8.4px;color:#e2e2e2;transform:scaleX(0.9450);">Sheen</div>
<div class="a t n" style="left:717.99px;top:302.31px;font-size:8.4px;color:#e2e2e2;transform:scaleX(0.9450);">0.000</div>
<div class="a" style="left:587.2px;top:320.90px;width:159.89999999999998px;height:12.7px;border-radius:2.2px;background:#585858;overflow:hidden"><div class="a" style="left:0;top:0;height:12.7px;width:78.65px;background:#5480c5"></div></div>
<div class="a t n" style="left:592.88px;top:318.61px;font-size:8.4px;color:#e2e2e2;transform:scaleX(0.9450);">Sheen Tint</div>
<div class="a t n" style="left:717.99px;top:318.61px;font-size:8.4px;color:#e2e2e2;transform:scaleX(0.9450);">0.500</div>
<div class="a" style="left:587.2px;top:337.20px;width:159.89999999999998px;height:12.7px;border-radius:2.2px;background:#585858;overflow:hidden"></div>
<div class="a t n" style="left:592.97px;top:334.91px;font-size:8.4px;color:#e2e2e2;transform:scaleX(0.9450);">Clearcoat</div>
<div class="a t n" style="left:717.99px;top:334.91px;font-size:8.4px;color:#e2e2e2;transform:scaleX(0.9450);">0.000</div>
<div class="a" style="left:587.2px;top:353.50px;width:159.89999999999998px;height:12.7px;border-radius:2.2px;background:#585858;overflow:hidden"><div class="a" style="left:0;top:0;height:12.7px;width:2.27px;background:#5480c5"></div></div>
<div class="a t n" style="left:592.97px;top:351.21px;font-size:8.4px;color:#e2e2e2;transform:scaleX(0.9450);">Clearcoat Roughness</div>
<div class="a t n" style="left:717.99px;top:351.21px;font-size:8.4px;color:#e2e2e2;transform:scaleX(0.9450);">0.030</div>
<div class="a" style="left:587.2px;top:369.20px;width:159.89999999999998px;height:12.7px;border-radius:2.2px;background:#585858;overflow:hidden"></div>
<div class="a t n" style="left:596.64px;top:367.81px;font-size:8.4px;color:#e2e2e2;transform:scaleX(0.9450);">IOR</div>
<div class="a t n" style="left:714.49px;top:367.81px;font-size:8.4px;color:#e2e2e2;transform:scaleX(0.9450);">1.450</div>
<div class="a" style="left:587.2px;top:385.30px;width:159.89999999999998px;height:12.7px;border-radius:2.2px;background:#585858;overflow:hidden"></div>
<div class="a t n" style="left:593.45px;top:383.01px;font-size:8.4px;color:#e2e2e2;transform:scaleX(0.9450);">Transmission</div>
<div class="a t n" style="left:717.99px;top:383.01px;font-size:8.4px;color:#e2e2e2;transform:scaleX(0.9450);">0.000</div>
<div class="a" style="left:587.2px;top:401.10px;width:159.89999999999998px;height:12.7px;border-radius:2.2px;background:#585858;overflow:hidden"></div>
<div class="a t n" style="left:593.45px;top:398.81px;font-size:8.4px;color:#e2e2e2;transform:scaleX(0.9450);">Transmission Roughness</div>
<div class="a t n" style="left:717.99px;top:398.81px;font-size:8.4px;color:#e2e2e2;transform:scaleX(0.9450);">0.000</div>
<div class="a t n" style="left:587.84px;top:413.91px;font-size:8.4px;color:#e2e2e2;transform:scaleX(0.9450);">Emission</div>
<div class="a" style="left:587.2px;top:431.70px;width:159.89999999999998px;height:12.7px;border-radius:2.2px;background:#585858;overflow:hidden"></div>
<div class="a t n" style="left:596.64px;top:430.31px;font-size:8.4px;color:#e2e2e2;transform:scaleX(0.9450);">Emission Strength</div>
<div class="a t n" style="left:714.49px;top:430.31px;font-size:8.4px;color:#e2e2e2;transform:scaleX(0.9450);">1.000</div>
<div class="a" style="left:587.2px;top:447.30px;width:159.89999999999998px;height:12.7px;border-radius:2.2px;background:#585858;overflow:hidden"><div class="a" style="left:0;top:0;height:12.7px;width:159.90px;background:#5480c5"></div></div>
<div class="a t n" style="left:593.35px;top:445.01px;font-size:8.4px;color:#e2e2e2;transform:scaleX(0.9450);">Alpha</div>
<div class="a t n" style="left:717.99px;top:445.01px;font-size:8.4px;color:#e2e2e2;transform:scaleX(0.9450);">1.000</div>
<div class="a t n" style="left:587.84px;top:460.71px;font-size:8.4px;color:#e2e2e2;transform:scaleX(0.9450);">Normal</div>
<div class="a t n" style="left:588.17px;top:476.31px;font-size:8.4px;color:#e2e2e2;transform:scaleX(0.9450);">Clearcoat Normal</div>
<div class="a t n" style="left:588.65px;top:491.51px;font-size:8.4px;color:#e2e2e2;transform:scaleX(0.9450);">Tangent</div>
<div class="a" style="left:751.20px;top:85.70px;width:7.6px;height:7.6px;border-radius:50%;background:#63c763;border:.7px solid #1a1a1a"></div>
<div class="a" style="left:574.70px;top:144.60px;width:7.6px;height:7.6px;border-radius:50%;background:#c7c729;border:.7px solid #1a1a1a"></div>
<div class="a" style="left:574.70px;top:160.60px;width:7.6px;height:7.6px;border-radius:50%;background:#a1a1a1;border:.7px solid #1a1a1a"></div>
<div class="a" style="left:574.70px;top:176.90px;width:7.6px;height:7.6px;border-radius:50%;background:#6363c7;border:.7px solid #1a1a1a"></div>
<div class="a" style="left:574.70px;top:193.20px;width:7.6px;height:7.6px;border-radius:50%;background:#c7c729;border:.7px solid #1a1a1a"></div>
<div class="a" style="left:574.70px;top:209.50px;width:7.6px;height:7.6px;border-radius:50%;background:#a1a1a1;border:.7px solid #1a1a1a"></div>
<div class="a" style="left:574.70px;top:225.80px;width:7.6px;height:7.6px;border-radius:50%;background:#a1a1a1;border:.7px solid #1a1a1a"></div>
<div class="a" style="left:574.70px;top:241.80px;width:7.6px;height:7.6px;border-radius:50%;background:#a1a1a1;border:.7px solid #1a1a1a"></div>
<div class="a" style="left:574.70px;top:258.10px;width:7.6px;height:7.6px;border-radius:50%;background:#a1a1a1;border:.7px solid #1a1a1a"></div>
<div class="a" style="left:574.70px;top:274.50px;width:7.6px;height:7.6px;border-radius:50%;background:#a1a1a1;border:.7px solid #1a1a1a"></div>
<div class="a" style="left:574.70px;top:290.60px;width:7.6px;height:7.6px;border-radius:50%;background:#a1a1a1;border:.7px solid #1a1a1a"></div>
<div class="a" style="left:574.70px;top:306.90px;width:7.6px;height:7.6px;border-radius:50%;background:#a1a1a1;border:.7px solid #1a1a1a"></div>
<div class="a" style="left:574.70px;top:323.20px;width:7.6px;height:7.6px;border-radius:50%;background:#a1a1a1;border:.7px solid #1a1a1a"></div>
<div class="a" style="left:574.70px;top:339.50px;width:7.6px;height:7.6px;border-radius:50%;background:#a1a1a1;border:.7px solid #1a1a1a"></div>
<div class="a" style="left:574.70px;top:355.80px;width:7.6px;height:7.6px;border-radius:50%;background:#a1a1a1;border:.7px solid #1a1a1a"></div>
<div class="a" style="left:574.70px;top:371.50px;width:7.6px;height:7.6px;border-radius:50%;background:#a1a1a1;border:.7px solid #1a1a1a"></div>
<div class="a" style="left:574.70px;top:387.60px;width:7.6px;height:7.6px;border-radius:50%;background:#a1a1a1;border:.7px solid #1a1a1a"></div>
<div class="a" style="left:574.70px;top:403.40px;width:7.6px;height:7.6px;border-radius:50%;background:#a1a1a1;border:.7px solid #1a1a1a"></div>
<div class="a" style="left:574.70px;top:418.50px;width:7.6px;height:7.6px;border-radius:50%;background:#c7c729;border:.7px solid #1a1a1a"></div>
<div class="a" style="left:574.70px;top:434.00px;width:7.6px;height:7.6px;border-radius:50%;background:#a1a1a1;border:.7px solid #1a1a1a"></div>
<div class="a" style="left:574.70px;top:449.60px;width:7.6px;height:7.6px;border-radius:50%;background:#a1a1a1;border:.7px solid #1a1a1a"></div>
<div class="a" style="left:574.70px;top:465.30px;width:7.6px;height:7.6px;border-radius:50%;background:#6363c7;border:.7px solid #1a1a1a"></div>
<div class="a" style="left:574.70px;top:480.90px;width:7.6px;height:7.6px;border-radius:50%;background:#6363c7;border:.7px solid #1a1a1a"></div>
<div class="a" style="left:574.70px;top:496.10px;width:7.6px;height:7.6px;border-radius:50%;background:#6363c7;border:.7px solid #1a1a1a"></div>
<div class="a" style="left:792.4px;top:63px;width:103.20000000000005px;height:88px;border-radius:2.2px;background:rgba(78,78,78,.66);box-shadow:0 2px 8px 1px rgba(0,0,0,.55);overflow:hidden;"><div class="a" style="left:0;top:0;width:103.20000000000005px;height:14.599999999999994px;background:#802b34"></div></div>
<svg class="a" style="left:799.5px;top:68.2px" width="6" height="5" viewBox="0 0 6 5"><path d="M0.5 0.6H5.3L2.9 4.6Z" fill="#d0d0d0"/></svg>
<div class="a t sh" style="left:807.84px;top:62.91px;font-size:8.4px;color:#ececec;transform:scaleX(0.9449);">Material Output</div>
<div class="a" style="left:800.00px;top:83.40px;width:87.00px;height:12.40px;border-radius:2.6px;background:#2a2a2a"></div>
<div class="a t n" style="left:803.95px;top:81.01px;font-size:8.4px;color:#e2e2e2;transform:scaleX(0.9450);">All</div>
<svg class="a" style="left:0;top:0" width="1" height="1"><path d="M880.9 89.1L883.0 91.29999999999998L885.1 89.1" stroke="#dcdcdc" stroke-width="1.1" fill="none" stroke-linecap="round" stroke-linejoin="round"/></svg>
<div class="a t n" style="left:800.88px;top:99.61px;font-size:8.4px;color:#e2e2e2;transform:scaleX(0.9450);">Surface</div>
<div class="a" style="left:788.60px;top:104.20px;width:7.6px;height:7.6px;border-radius:50%;background:#63c763;border:.7px solid #1a1a1a"></div>
<div class="a t n" style="left:801.35px;top:115.61px;font-size:8.4px;color:#e2e2e2;transform:scaleX(0.9450);">Volume</div>
<div class="a" style="left:788.60px;top:120.20px;width:7.6px;height:7.6px;border-radius:50%;background:#63c763;border:.7px solid #1a1a1a"></div>
<div class="a t n" style="left:800.64px;top:132.21px;font-size:8.4px;color:#e2e2e2;transform:scaleX(0.9450);">Displacement</div>
<div class="a" style="left:788.60px;top:136.80px;width:7.6px;height:7.6px;border-radius:50%;background:#6363c7;border:.7px solid #1a1a1a"></div>
<div class="a t " style="left:-5.15px;top:481.01px;font-size:11px;color:#e8e8e8;transform:scaleX(0.9295);">ScreenActive</div>
<div class="a" style="left:995px;top:56px;width:233.4px;height:466px;background:#383838;"></div>
<div class="a" style="left:995px;top:56px;width:233.4px;height:24px;background:#424242;"></div>
<svg class="a" style="left:1003px;top:64px" width="9" height="8" viewBox="0 0 9 8"><path d="M1 1.2H7.6L4.3 7.2Z" fill="#c4c4c4"/></svg>
<div class="a t sh" style="left:1016.44px;top:61.07px;font-size:12px;color:#ececec;transform:scaleX(0.9256);">Node Wrangler</div>
<svg class="a" style="left:0;top:0" width="1" height="1"><rect x="1210.70" y="65.20" width="1.2" height="1" fill="#6e6e6e"/><rect x="1210.70" y="66.20" width="1.3" height="1.3" fill="#0e0e0e"/><rect x="1210.70" y="68.35" width="1.2" height="1" fill="#6e6e6e"/><rect x="1210.70" y="69.35" width="1.3" height="1.3" fill="#0e0e0e"/><rect x="1213.85" y="65.20" width="1.2" height="1" fill="#6e6e6e"/><rect x="1213.85" y="66.20" width="1.3" height="1.3" fill="#0e0e0e"/><rect x="1213.85" y="68.35" width="1.2" height="1" fill="#6e6e6e"/><rect x="1213.85" y="69.35" width="1.3" height="1.3" fill="#0e0e0e"/><rect x="1217.00" y="65.20" width="1.2" height="1" fill="#6e6e6e"/><rect x="1217.00" y="66.20" width="1.3" height="1.3" fill="#0e0e0e"/><rect x="1217.00" y="68.35" width="1.2" height="1" fill="#6e6e6e"/><rect x="1217.00" y="69.35" width="1.3" height="1.3" fill="#0e0e0e"/><rect x="1220.15" y="65.20" width="1.2" height="1" fill="#6e6e6e"/><rect x="1220.15" y="66.20" width="1.3" height="1.3" fill="#0e0e0e"/><rect x="1220.15" y="68.35" width="1.2" height="1" fill="#6e6e6e"/><rect x="1220.15" y="69.35" width="1.3" height="1.3" fill="#0e0e0e"/></svg>
<div class="a t " style="left:1005.97px;top:91.01px;font-size:11px;color:#e0e0e0;transform:scaleX(0.9173);">(Quick access: Shift+W)</div>
<div class="a" style="left:1003px;top:113px;width:218.40000000000003px;height:20px;background:#2b2b2b;border-radius:4px;border:1px solid #454545;"></div>
<div class="a t " style="left:1010.25px;top:116.01px;font-size:11px;color:#dcdcdc;transform:scaleX(0.9083);">Merge Selected Nodes</div>
<svg class="a" style="left:0;top:0" width="1" height="1"><path d="M1211.55 122.45L1214.2 125.14999999999999L1216.8500000000001 122.45" stroke="#dcdcdc" stroke-width="1.2" fill="none" stroke-linecap="round" stroke-linejoin="round"/></svg>
<div class="a" style="left:1003px;top:144.3px;width:218.40000000000003px;height:19.6px;background:#2b2b2b;border-radius:4px;border:1px solid #454545;"></div>
<div class="a t " style="left:1010.35px;top:147.01px;font-size:11px;color:#dcdcdc;transform:scaleX(0.9244);">Switch Node Type</div>
<svg class="a" style="left:0;top:0" width="1" height="1"><path d="M1211.55 153.45000000000002L1214.2 156.15L1216.8500000000001 153.45000000000002" stroke="#dcdcdc" stroke-width="1.2" fill="none" stroke-linecap="round" stroke-linejoin="round"/></svg>
<div class="a" style="left:1004px;top:176px;width:216.20000000000005px;height:18px;background:#585858;border-radius:4px 4px 0 0;"></div>
<div class="a t " style="left:1075.35px;top:178.01px;font-size:11px;color:#e8e8e8;transform:scaleX(0.9015);">Add Texture Setup</div>
<div class="a" style="left:1004px;top:195.1px;width:216.20000000000005px;height:18.8px;background:#585858;border-radius:0 0 4px 4px;"></div>
<div class="a t " style="left:1068.96px;top:197.01px;font-size:11px;color:#e8e8e8;transform:scaleX(0.8982);">Add Principled Setup</div>
<div class="a" style="left:1004px;top:227.3px;width:216.20000000000005px;height:17.8px;background:#585858;border-radius:4px 4px 0 0;"></div>
<div class="a t " style="left:1080.34px;top:229.01px;font-size:11px;color:#e8e8e8;transform:scaleX(0.9135);">Detach Outputs</div>
<div class="a" style="left:1004px;top:246.1px;width:216.20000000000005px;height:18.5px;background:#585858;border-radius:0;"></div>
<div class="a t " style="left:1083.06px;top:248.01px;font-size:11px;color:#e8e8e8;transform:scaleX(0.9182);">Swap Links</div>
<div class="a" style="left:1003px;top:265px;width:218.40000000000003px;height:20.2px;background:#2b2b2b;border-radius:0 0 4px 4px;border:1px solid #454545;"></div>
<div class="a t " style="left:1027.35px;top:268.01px;font-size:11px;color:#dcdcdc;transform:scaleX(0.9010);">Add Reroutes</div>
<svg class="a" style="left:0;top:0" width="1" height="1"><path d="M1211.55 274.45L1214.2 277.15000000000003L1216.8500000000001 274.45" stroke="#dcdcdc" stroke-width="1.2" fill="none" stroke-linecap="round" stroke-linejoin="round"/></svg>
<div class="a" style="left:1003px;top:297px;width:218.40000000000003px;height:19.8px;background:#2b2b2b;border-radius:4px 4px 0 0;border:1px solid #454545;"></div>
<div class="a t " style="left:1026.42px;top:300.01px;font-size:11px;color:#dcdcdc;transform:scaleX(0.9326);">Link Active To Selected</div>
<svg class="a" style="left:0;top:0" width="1" height="1"><path d="M1211.55 306.45L1214.2 309.15000000000003L1216.8500000000001 306.45" stroke="#dcdcdc" stroke-width="1.2" fill="none" stroke-linecap="round" stroke-linejoin="round"/></svg>
<div class="a" style="left:1004px;top:317.2px;width:216.20000000000005px;height:18.5px;background:#585858;border-radius:0 0 4px 4px;"></div>
<div class="a t " style="left:1073.66px;top:319.01px;font-size:11px;color:#e8e8e8;transform:scaleX(0.9002);">Connect to Output</div>
<div class="a" style="left:1004px;top:349.4px;width:107.40000000000009px;height:17.9px;background:#585858;border-radius:4px 0 0 0;"></div>
<div class="a t " style="left:1028.75px;top:351.01px;font-size:11px;color:#e8e8e8;transform:scaleX(0.9133);">Clear Label</div>
<div class="a" style="left:1112.4px;top:349.4px;width:107.79999999999995px;height:17.9px;background:#585858;border-radius:0 4px 0 0;"></div>
<div class="a t " style="left:1130.43px;top:351.01px;font-size:11px;color:#e8e8e8;transform:scaleX(0.9204);">Modify Labels</div>
<div class="a" style="left:1003px;top:367.2px;width:218.40000000000003px;height:20.1px;background:#2b2b2b;border-radius:0 0 4px 4px;border:1px solid #454545;"></div>
<div class="a t " style="left:1010.04px;top:370.01px;font-size:11px;color:#dcdcdc;transform:scaleX(0.9125);">Batch Change</div>
<svg class="a" style="left:0;top:0" width="1" height="1"><path d="M1211.55 376.45L1214.2 379.15000000000003L1216.8500000000001 376.45" stroke="#dcdcdc" stroke-width="1.2" fill="none" stroke-linecap="round" stroke-linejoin="round"/></svg>
<div class="a" style="left:1003px;top:394.2px;width:218.40000000000003px;height:19.6px;background:#2b2b2b;border-radius:4px;border:1px solid #454545;"></div>
<div class="a t " style="left:1010.45px;top:397.01px;font-size:11px;color:#dcdcdc;transform:scaleX(0.9126);">Copy to Selected</div>
<svg class="a" style="left:0;top:0" width="1" height="1"><path d="M1211.55 403.45L1214.2 406.15000000000003L1216.8500000000001 403.45" stroke="#dcdcdc" stroke-width="1.2" fill="none" stroke-linecap="round" stroke-linejoin="round"/></svg>
<div class="a" style="left:1004px;top:426.1px;width:216.20000000000005px;height:17.8px;background:#585858;border-radius:4px;"></div>
<div class="a t " style="left:1082.75px;top:428.01px;font-size:11px;color:#e8e8e8;transform:scaleX(0.9092);">Reload Images</div>
<div class="a" style="left:1004px;top:457.2px;width:216.20000000000005px;height:17.9px;background:#585858;border-radius:4px;"></div>
<div class="a t " style="left:1080.42px;top:459.01px;font-size:11px;color:#e8e8e8;transform:scaleX(0.9302);">Frame Selected</div>
<div class="a" style="left:1004px;top:488.1px;width:216.20000000000005px;height:17.8px;background:#585858;border-radius:4px;"></div>
<div class="a t " style="left:1090.35px;top:490.01px;font-size:11px;color:#e8e8e8;transform:scaleX(0.9054);">Align Nodes</div>
<div class="a" style="left:1004px;top:519.3px;width:216.20000000000005px;height:17.6px;background:#585858;border-radius:4px;"></div>
<svg class="a" style="left:1007.2px;top:177.2px" width="15" height="15" viewBox="0 0 15 15"><rect x=".4" y=".4" width="11.2" height="13.8" rx="1.6" fill="#e6e6e6"/><rect x="1.7" y="2" width="8.5" height="2.3" fill="#585858"/><circle cx="11.9" cy="9" r="3.5" fill="#585858"/><circle cx="11.9" cy="9" r="2.6" fill="#a2a2a2"/></svg>
<svg class="a" style="left:1007.2px;top:196.4px" width="15" height="15" viewBox="0 0 15 15"><rect x=".4" y=".4" width="11.2" height="13.8" rx="1.6" fill="#e6e6e6"/><rect x="1.7" y="2" width="8.5" height="2.3" fill="#585858"/><circle cx="11.9" cy="9" r="3.5" fill="#585858"/><circle cx="11.9" cy="9" r="2.6" fill="#a2a2a2"/></svg>
<svg class="a" style="left:1006px;top:228px" width="18" height="16" viewBox="0 0 18 16"><g fill="none" stroke="#cfcfcf" stroke-width="1.1" stroke-linecap="round"><path d="M9.9 6.6A3.3 3.3 0 1 1 14.6 7.6"/><path d="M8.1 9.6A3.3 3.3 0 1 1 3.4 8.6"/><path d="M4.6 1.4L5 3.2M2.2 2.6L3.6 4M1.2 5L3 5.4"/><path d="M13.4 14.6L13 12.8M15.8 13.4L14.4 12M16.8 11L15 10.6" opacity=".7"/></g></svg>
<svg class="a" style="left:1011px;top:272px" width="8" height="8" viewBox="0 0 8 8"><circle cx="4" cy="3.9" r="2.5" fill="none" stroke="#dcdcdc" stroke-width="1.2"/></svg>
<svg class="a" style="left:1006px;top:298px" width="18" height="18" viewBox="0 0 18 18"><g fill="none" stroke="#dadada" stroke-width="1.2" transform="translate(9.3 9) rotate(-45)"><path d="M-1.6 -2.6H-6.4A2.6 2.6 0 0 0 -6.4 2.6H-1.6M1.6 -2.6H6.4A2.6 2.6 0 0 1 6.4 2.6H1.6M-3.6 0H3.6M-1.6 -2.6A2.6 2.6 0 0 1 0.2 -1.2M1.6 2.6A2.6 2.6 0 0 1 -0.2 1.2"/></g></svg>
<svg class="a" style="left:1007px;top:319px" width="16" height="16" viewBox="0 0 16 16"><path d="M1 5.8L3.5 1.2L6 5.8Z" fill="#ececec"/><path d="M6.6 4.3H9.6Q11.2 4.4 10.4 6L6.2 10.4Q5 12 7 12H10.6" fill="none" stroke="#d6d6d6" stroke-width="1.1"/><rect x="11" y="10.1" width="3.9" height="4.6" fill="#efefef"/></svg>
<svg class="a" style="left:1007px;top:427px" width="16" height="16" viewBox="0 0 16 16"><g fill="none" stroke="#e0e0e0" stroke-width="1.1"><path d="M1.4 6.4A6.6 6.6 0 0 1 14 5.4"/><path d="M14.6 1V5.9H9.6"/><path d="M14.6 9.2A6.6 6.6 0 0 1 2 10.2"/><path d="M1.4 14.6V9.7H6.4"/></g></svg>
<svg class="a" style="left:1007px;top:458px" width="16" height="16" viewBox="0 0 16 16"><rect x="1.5" y="1" width="13" height="13.8" fill="none" stroke="#d4d4d4" stroke-width="1" stroke-dasharray="1.6 1.3"/><g fill="none" stroke="#e4e4e4" stroke-width="1"><rect x="6.6" y="4.4" width="2.8" height="2.8"/><rect x="4.2" y="7.6" width="3" height="3"/><rect x="7.9" y="8.6" width="3.3" height="3"/></g></svg>
<svg class="a" style="left:1007px;top:489px" width="16" height="16" viewBox="0 0 16 16"><circle cx="2.4" cy="3.4" r="1.4" fill="#ececec"/><circle cx="7.4" cy="3.4" r="1.4" fill="#ececec"/><circle cx="12.4" cy="3.4" r="1.4" fill="#ececec"/><path d="M1.6 11.4H14.6M4.6 8.2L1.4 11.4L4.6 14.6M11.6 8.2L14.8 11.4L11.6 14.6" fill="none" stroke="#ececec" stroke-width="1.1"/></svg>
<svg class="a" style="left:1011px;top:519.6px" width="9" height="3" viewBox="0 0 9 3"><ellipse cx="4.5" cy="2.2" rx="3.6" ry="1.8" fill="#d8d8d8"/></svg>
<div class="a" style="left:1228px;top:57px;width:20px;height:464.3px;background:#232323;border-radius:0 0 5px 0;"></div>
<div class="a" style="left:1228px;top:62px;width:15.8px;height:36.5px;background:#2c2c2c;border-radius:0 2.4px 2.4px 0;"></div>
<div class="a t" style="left:0;top:0;font-size:11px;color:#dcdcdc;transform-origin:0 0;transform:translate(1229.21px,92.56px) rotate(-90deg) scaleX(1.0054);">Item</div>
<div class="a" style="left:1228px;top:105.2px;width:15.8px;height:33.499999999999986px;background:#2c2c2c;border-radius:0 2.4px 2.4px 0;"></div>
<div class="a t" style="left:0;top:0;font-size:11px;color:#dcdcdc;transform-origin:0 0;transform:translate(1229.21px,131.95px) rotate(-90deg) scaleX(0.9799);">Tool</div>
<div class="a" style="left:1228px;top:145.4px;width:15.8px;height:38.19999999999999px;background:#2c2c2c;border-radius:0 2.4px 2.4px 0;"></div>
<div class="a t" style="left:0;top:0;font-size:11px;color:#dcdcdc;transform-origin:0 0;transform:translate(1229.21px,177.05px) rotate(-90deg) scaleX(0.9880);">View</div>
<div class="a" style="left:1228px;top:190px;width:15.8px;height:51.900000000000006px;background:#2c2c2c;border-radius:0 2.4px 2.4px 0;"></div>
<div class="a t" style="left:0;top:0;font-size:11px;color:#dcdcdc;transform-origin:0 0;transform:translate(1229.21px,234.84px) rotate(-90deg) scaleX(0.9029);">Options</div>
<div class="a" style="left:1228px;top:247.7px;width:15.8px;height:87.90000000000003px;background:#494949;border-radius:0 2.4px 2.4px 0;"></div>
<div class="a t" style="left:0;top:0;font-size:11px;color:#ffffff;transform-origin:0 0;transform:translate(1229.21px,328.94px) rotate(-90deg) scaleX(0.8998);">Node Wrangler</div>
<div class="a" style="left:1248px;top:0px;width:32px;height:550px;background:#1e1e1e;"></div>
<div class="a" style="left:1251px;top:0px;width:28.2px;height:521.3px;background:#232323;border-radius:0 0 0 5px;"></div>
<div class="a" style="left:1252.7px;top:-22px;width:25.9px;height:25.1px;background:#2c2c2c;border-radius:4px 1px 1px 4px;"></div>
<div class="a" style="left:1252.7px;top:6px;width:25.9px;height:25.6px;background:#2c2c2c;border-radius:4px 1px 1px 4px;"></div>
<div class="a" style="left:1252.7px;top:34.1px;width:25.9px;height:25.1px;background:#2c2c2c;border-radius:4px 1px 1px 4px;"></div>
<div class="a" style="left:1252.7px;top:61.7px;width:25.9px;height:25.799999999999997px;background:#2c2c2c;border-radius:4px 1px 1px 4px;"></div>
<div class="a" style="left:1252.7px;top:90px;width:27.3px;height:25.799999999999997px;background:#424242;border-radius:4px 0 0 4px;"></div>
<div class="a" style="left:1252.7px;top:125.9px;width:25.9px;height:26.19999999999999px;background:#2c2c2c;border-radius:4px 1px 1px 4px;"></div>
<svg class="a" style="left:1256px;top:9px" width="20" height="20" viewBox="0 0 20 20"><circle cx="10" cy="10.1" r="3.3" fill="#6d9fe0"/><path d="M11.4 3.7A6.5 6.5 0 1 0 16.1 12.4" fill="none" stroke="#6d9fe0" stroke-width="1.1" stroke-linecap="round"/><circle cx="15" cy="5" r="1.9" fill="#6d9fe0"/></svg>
<svg class="a" style="left:1256.5px;top:36.1px" width="20" height="20" viewBox="0 0 20 20"><path d="M3.2 8.4Q5 5.6 13.6 3.6Q16.6 3 16.6 5.4Q15.6 10.6 12.8 14.4A5.6 5.6 0 1 1 3.2 8.4Z" fill="none" stroke="#6d9fe0" stroke-width="1.1"/><circle cx="8.2" cy="11" r="3.3" fill="none" stroke="#6d9fe0" stroke-width="1.5"/><circle cx="8.2" cy="11" r="1.1" fill="#6d9fe0"/><circle cx="13.9" cy="6.1" r="1" fill="#6d9fe0"/></svg>
<svg class="a" style="left:1256px;top:64px" width="20" height="20" viewBox="0 0 20 20"><path d="M4.75 5.55H15.3L10 16.1Z" fill="none" stroke="#7bcf7b" stroke-width="1.1"/><g fill="#262626" stroke="#7bcf7b" stroke-width="1"><rect x="3.3" y="4.2" width="2.9" height="2.9"/><rect x="13.85" y="4.2" width="2.9" height="2.9"/><rect x="8.55" y="14.65" width="2.9" height="2.9"/></g></svg>
<svg class="a" style="left:1258.9px;top:95.8px" width="14.2" height="14.2" viewBox="0 0 14.2 14.2"><circle cx="7.1" cy="7.1" r="7.1" fill="#f0585e"/><path d="M7.1 7.1Q7.6 3.6 7.1 .6A6.5 6.5 0 0 1 13.6 7.1Q10.4 7.9 7.1 7.1Z" fill="#333"/><path d="M7.1 7.1Q6.4 10.6 7.1 13.6A6.5 6.5 0 0 1 .6 7.1Q3.8 6.1 7.1 7.1Z" fill="#333"/></svg>
<svg class="a" style="left:1259px;top:131.9px" width="14.2" height="14.2" viewBox="0 0 14.2 14.2"><rect x="0" y="0" width="14.2" height="14.2" fill="#e0565a"/><rect x="4.05" y="1.00" width="3.05" height="3.05" fill="#1e1e1e"/><rect x="10.15" y="1.00" width="3.05" height="3.05" fill="#1e1e1e"/><rect x="1.00" y="4.05" width="3.05" height="3.05" fill="#1e1e1e"/><rect x="7.10" y="4.05" width="3.05" height="3.05" fill="#1e1e1e"/><rect x="4.05" y="7.10" width="3.05" height="3.05" fill="#1e1e1e"/><rect x="10.15" y="7.10" width="3.05" height="3.05" fill="#1e1e1e"/><rect x="1.00" y="10.15" width="3.05" height="3.05" fill="#1e1e1e"/><rect x="7.10" y="10.15" width="3.05" height="3.05" fill="#1e1e1e"/></svg>
<div class="a" style="left:0px;top:521.3px;width:1280px;height:1.4px;background:#181818;"></div>
<div class="a" style="left:0px;top:522.6px;width:1280px;height:19.2px;background:#303030;"></div>
<svg class="a" style="left:159px;top:524px" width="14" height="17" viewBox="0 0 14 17"><rect x="1.5" y="1.4" width="10.2" height="14.2" rx="4" fill="none" stroke="#bdbdbd" stroke-width="1.1"/><path d="M7 1H8.6Q12.2 1.4 12.2 5.2V8H7Z" fill="#303030"/><path d="M7.4 .9H8.4Q12.2 1.2 12.2 5V7.4H7.4Z" fill="#c4c4c4"/></svg>
<div class="a" style="left:0px;top:541.7px;width:1280px;height:8.3px;background:#636363;"></div>
<div class="a" style="left:0px;top:548.4px;width:253.5px;height:1.6px;background:#525252;"></div>
<div class="a" style="left:253.5px;top:547.8px;width:805px;height:1.2px;background:#3d3d3d;"></div>
<div class="a" style="left:254px;top:548.8px;width:157.8px;height:1.2px;background:#b8b8b8;"></div>
<div class="a" style="left:413px;top:548.8px;width:159.5px;height:1.2px;background:#b0b0b0;"></div>
<div class="a" style="left:576px;top:548.8px;width:159px;height:1.2px;background:#b0b0b0;"></div>
<div class="a" style="left:737.5px;top:548.8px;width:158.5px;height:1.2px;background:#f2f2f2;"></div>
<div class="a" style="left:899px;top:548.8px;width:158.5px;height:1.2px;background:#b0b0b0;"></div></div></body></html>
